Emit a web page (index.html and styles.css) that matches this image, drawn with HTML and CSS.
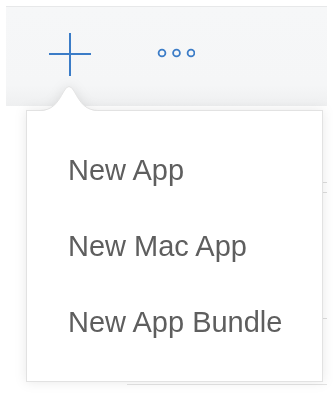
FILE: index.html
```html
<!DOCTYPE html>
<html lang="en">
  <head>
    <meta charset="UTF-8" />
    <meta name="viewport" content="width=device-width, initial-scale=1.0" />
    <title>New menu</title>
    <link rel="stylesheet" href="styles.css">
  </head>
  <body>
    <div class="toolbar">
      <button class="tool add" aria-label="Add">
        <svg width="42" height="43" viewBox="0 0 42 43">
          <path d="M21 0V43M0 21H42" stroke="#3b7cc7" stroke-width="2" fill="none" />
        </svg>
      </button>
      <button class="tool more" aria-label="More">
        <svg width="38" height="10" viewBox="0 0 38 10">
          <circle cx="5" cy="5" r="3.4" />
          <circle cx="19.5" cy="5" r="3.4" />
          <circle cx="34" cy="5" r="3.4" />
        </svg>
      </button>
    </div>

    <div class="backdrop">
      <span class="mark m1"></span>
      <span class="mark m2"></span>
      <span class="mark m3"></span>
      <span class="mark m4"></span>
    </div>

    <div class="popover">
      <svg class="caret" width="60" height="27" viewBox="0 0 60 27">
        <path class="caret-fill" d="M0 27C13 27 18 20 25 7Q30 -2 35 7C42 20 47 27 60 27Z" />
        <path class="caret-line" d="M0 26.5C13 26.5 18 20 25 7Q30 -2 35 7C42 20 47 26.5 60 26.5" />
      </svg>
      <ul class="menu">
        <li>New App</li>
        <li>New Mac App</li>
        <li>New App Bundle</li>
      </ul>
    </div>
  </body>
</html>
```

FILE: styles.css
```css
* {
  margin: 0;
  padding: 0;
  box-sizing: border-box;
}
body {
  width: 333px;
  height: 394px;
  overflow: hidden;
  background: #fff;
  font-family: "Liberation Sans", Arial, sans-serif;
  position: relative;
}
.toolbar {
  margin: 6px 6px 0 6px;
  height: 100px;
  display: flex;
  align-items: flex-start;
  padding: 26px 0 0 43px;
  border-top: 1px solid #e7e8e9;
  background: linear-gradient(#f6f7f8 0, #f5f6f7 78px, #eeeff0 100px);
}
.tool {
  border: none;
  background: none;
  display: block;
}
.add svg {
  display: block;
}
.more {
  margin: 15px 0 0 66px;
}
.more svg {
  display: block;
  fill: none;
  stroke: #3b7cc7;
  stroke-width: 1.8;
}
.backdrop {
  position: absolute;
  left: 120px;
  top: 150px;
  width: 210px;
  height: 244px;
}
.mark {
  position: absolute;
  background: #ddd;
}
.m1 {
  right: 3px;
  top: 32px;
  width: 6px;
  height: 1px;
}
.m2 {
  right: 3px;
  top: 42px;
  width: 6px;
  height: 1px;
}
.m3 {
  right: 3px;
  top: 168px;
  width: 6px;
  height: 1px;
}
.m4 {
  left: 7px;
  top: 234px;
  width: 200px;
  height: 1px;
  background: #e4e4e4;
}
.popover {
  position: absolute;
  left: 26px;
  top: 84px;
  width: 297px;
  filter: drop-shadow(0 0 6px rgba(0, 0, 0, 0.09));
}
.caret {
  display: block;
  margin: 0 0 -1px 13px;
  position: relative;
  z-index: 1;
}
.caret-fill {
  fill: #fff;
}
.caret-line {
  fill: none;
  stroke: #e2e2e2;
  stroke-width: 1;
}
.menu {
  list-style: none;
  background: #fff;
  border: 1px solid #e2e2e2;
  padding: 21px 0 21px 41px;
}
.menu li {
  height: 76px;
  line-height: 76px;
  font-size: 29px;
  color: #5e5e5e;
}
```
